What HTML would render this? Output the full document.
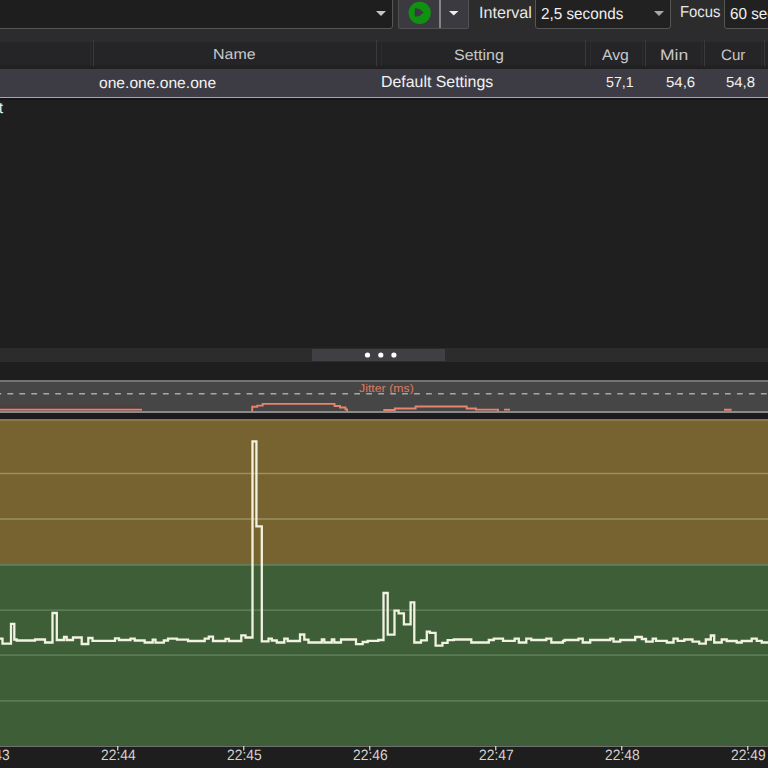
<!DOCTYPE html>
<html><head><meta charset="utf-8">
<style>
*{margin:0;padding:0;box-sizing:border-box}
html,body{width:768px;height:768px;overflow:hidden;background:#1f1f1f;font-family:"Liberation Sans",sans-serif}
.a{position:absolute}
.t{position:absolute;white-space:nowrap;line-height:1;transform-origin:0 0;text-rendering:geometricPrecision}
</style></head><body>
<div class="a" style="left:0;top:0;width:768px;height:30px;background:#2c2c2c"></div>
<div class="a" style="left:-4px;top:-4px;width:397px;height:33px;background:#1e1e1e;border:1.5px solid #565656;border-radius:3px"></div>
<div class="a" style="left:397.5px;top:-4px;width:71px;height:33px;background:#3b3a40;border:1.5px solid #505050;border-radius:2px"></div>
<div class="a" style="left:439px;top:0;width:1.5px;height:28px;background:#858585"></div>
<div class="a" style="left:535px;top:-4px;width:136px;height:33px;background:#212121;border:1.5px solid #565656;border-radius:3px"></div>
<div class="a" style="left:723.5px;top:-4px;width:60px;height:33px;background:#212121;border:1.5px solid #565656;border-radius:3px"></div>
<svg class="a" style="left:0;top:0" width="768" height="30">
<path d="M376,11 L386,11 L381,16 Z" fill="#c4c4c4"/>
<path d="M449,11 L458.5,11 L453.75,15.5 Z" fill="#eee"/>
<path d="M654,11 L664,11 L659,16 Z" fill="#a8a8a8"/>
<circle cx="419.7" cy="12.8" r="11.1" fill="#0f920f"/>
<path d="M415.3,8.9 L419.3,9.7 L422.8,12.5 L419.3,15.3 L415.3,16.1 Z" fill="#3b3a40" stroke="#3b3a40" stroke-width="1.2" stroke-linejoin="round"/>
</svg>
<div class="t" style="left:479.25px;top:4.60px;font-size:16.26px;color:#e8e8e8;transform:scaleX(0.9925)">Interval</div>
<div class="t" style="left:541.14px;top:6.87px;font-size:15.83px;color:#f0f0f0;transform:scaleX(0.9638)">2,5 seconds</div>
<div class="t" style="left:680.41px;top:4.87px;font-size:15.83px;color:#e8e8e8;transform:scaleX(0.9393)">Focus</div>
<div class="t" style="left:729.95px;top:7.17px;font-size:15.83px;color:#f0f0f0;transform:scaleX(0.9638)">60 seconds</div>
<div class="a" style="left:0;top:30px;width:768px;height:12px;background:#2c2c2e"></div>
<div class="a" style="left:0;top:42px;width:768px;height:23px;background:#252527"></div>
<div class="a" style="left:0;top:65px;width:768px;height:3px;background:#212124"></div>
<div class="a" style="left:90px;top:40px;width:1px;height:26px;background:#2c2c2f"></div><div class="a" style="left:93px;top:40px;width:1.3px;height:26px;background:#3a3a3d"></div>
<div class="a" style="left:381px;top:40px;width:1px;height:26px;background:#2c2c2f"></div><div class="a" style="left:376px;top:40px;width:1.3px;height:26px;background:#3a3a3d"></div>
<div class="a" style="left:590px;top:40px;width:1px;height:26px;background:#2c2c2f"></div><div class="a" style="left:584.5px;top:40px;width:1.3px;height:26px;background:#3a3a3d"></div>
<div class="a" style="left:642px;top:40px;width:1px;height:26px;background:#2c2c2f"></div><div class="a" style="left:645px;top:40px;width:1.3px;height:26px;background:#3a3a3d"></div>
<div class="a" style="left:701px;top:40px;width:1px;height:26px;background:#2c2c2f"></div><div class="a" style="left:704px;top:40px;width:1.3px;height:26px;background:#3a3a3d"></div>
<div class="a" style="left:761px;top:40px;width:1px;height:26px;background:#2c2c2f"></div><div class="a" style="left:764px;top:40px;width:1.3px;height:26px;background:#3a3a3d"></div>
<div class="t" style="left:212.62px;top:48.07px;font-size:14.53px;color:#c8c8c8;transform:scaleX(1.0999)">Name</div>
<div class="t" style="left:453.60px;top:48.08px;font-size:15.11px;color:#c8c8c8;transform:scaleX(1.0613)">Setting</div>
<div class="t" style="left:602.20px;top:47.68px;font-size:15.11px;color:#c8c8c8;transform:scaleX(1.0413)">Avg</div>
<div class="t" style="left:659.50px;top:47.68px;font-size:15.11px;color:#c8c8c8;transform:scaleX(1.1617)">Min</div>
<div class="t" style="left:721.04px;top:47.68px;font-size:15.11px;color:#c8c8c8;transform:scaleX(1.0015)">Cur</div>
<div class="a" style="left:0;top:68.5px;width:768px;height:28px;background:#3d3c44"></div>
<div class="a" style="left:0;top:96.5px;width:768px;height:1.8px;background:#a8a8a8"></div>
<div class="a" style="left:0;top:98.3px;width:768px;height:2px;background:#161616"></div>
<div class="t" style="left:99.08px;top:76.18px;font-size:15.23px;color:#f2f2f2;transform:scaleX(1.0256)">one.one.one.one</div>
<div class="t" style="left:380.73px;top:75.14px;font-size:15.97px;color:#f2f2f2;transform:scaleX(0.9951)">Default Settings</div>
<div class="t" style="left:606.33px;top:76.07px;font-size:14.53px;color:#f2f2f2;transform:scaleX(0.9804)">57,1</div>
<div class="t" style="left:665.60px;top:76.07px;font-size:14.53px;color:#f2f2f2;transform:scaleX(1.0322)">54,6</div>
<div class="t" style="left:725.90px;top:76.07px;font-size:14.53px;color:#f2f2f2;transform:scaleX(1.0285)">54,8</div>
<div class="t" style="left:-1.20px;top:101.15px;font-size:15.50px;color:#f2f2f2;transform:scaleX(1.0000)">t</div>
<div class="a" style="left:0;top:348px;width:768px;height:13.5px;background:#2c2c2d"></div>
<div class="a" style="left:312px;top:348.5px;width:133px;height:12.5px;background:#3f3f44"></div>
<svg class="a" style="left:0;top:340px" width="768" height="30">
<circle cx="367.5" cy="15" r="2.6" fill="#fff"/><circle cx="380.8" cy="15" r="2.6" fill="#fff"/><circle cx="393.9" cy="15" r="2.6" fill="#fff"/>
</svg>
<div class="a" style="left:0;top:361.5px;width:768px;height:18px;background:#1e1e1e"></div>
<div class="a" style="left:0;top:379.5px;width:768px;height:33.5px;background:#464646;border-top:2px solid #747474;border-bottom:2px solid #8a8a8a"></div>
<svg class="a" style="left:0;top:376px" width="768" height="44">
<defs><linearGradient id="jg" x1="0" y1="0" x2="0" y2="1"><stop offset="0" stop-color="#464646" stop-opacity="0"/><stop offset="1" stop-color="#5a3038" stop-opacity="0.6"/></linearGradient></defs>
<rect x="0" y="25" width="142" height="8" fill="url(#jg)"/>
<line x1="-4.56" y1="17.8" x2="770" y2="17.8" stroke="#a8a8a8" stroke-width="1.4" stroke-dasharray="5.8 6.16"/>
<path d="M0,33.6 H142 M252.2,35.5 V30.7 H257.2 V29.6 H262.7 V27.9 H334.5 V30 H340 V31.5 H345.5 V33.4 H347 V35.5 M383.3,34 H394.8 V32.5 H415.6 V30.5 H466.7 V32.5 H476 V33.6 H498 V35.5 M504,33.6 H510 M724,33.8 H731.6" fill="none" stroke="#e8846c" stroke-width="1.9"/>
</svg>
<div class="t" style="left:358.65px;top:383.90px;font-size:11.22px;color:#de7a62;transform:scaleX(1.0995)">Jitter (ms)</div>
<div class="a" style="left:0;top:413px;width:768px;height:6px;background:#1c1c20"></div>
<div class="a" style="left:0;top:419px;width:768px;height:146px;background:#76632f"></div>
<div class="a" style="left:0;top:419px;width:768px;height:1.5px;background:#8a7a48"></div>
<div class="a" style="left:0;top:565px;width:768px;height:181px;background:#3e5e38"></div>
<svg class="a" style="left:0;top:0" width="768" height="768">
<g stroke="#9a9062" stroke-width="1.3"><line x1="0" y1="473.5" x2="768" y2="473.5"/><line x1="0" y1="519" x2="768" y2="519"/></g>
<g stroke="#667e5c" stroke-width="1.8"><line x1="0" y1="564.8" x2="768" y2="564.8"/></g><g stroke="#66865e" stroke-width="1.3"><line x1="0" y1="610.2" x2="768" y2="610.2"/><line x1="0" y1="655.2" x2="768" y2="655.2"/><line x1="0" y1="700.9" x2="768" y2="700.9"/></g>
<path d="M0,638.7 H2.5 V643.7 H11.0 V623.8 H14.3 V639.5 H16.7 V640.5 H35.0 V639.5 H45.0 V642.5 H52.5 V613.0 H56.8 V640.0 H64.0 V637.0 H66.7 V640.0 H73.0 V637.5 H81.7 V644.0 H88.3 V638.0 H92.5 V640.8 H115.0 V638.3 H119.0 V640.0 H130.5 V638.7 H134.7 V640.5 H144.7 V642.5 H152.7 V639.7 H155.5 V642.7 H163.8 V640.5 H168.0 V638.7 H177.0 V639.7 H188.0 V641.0 H204.7 V638.7 H208.8 V636.7 H213.0 V641.0 H225.5 V638.8 H228.8 V641.0 H241.3 V635.3 H245.5 V637.5 H252.5 V441.4 H256.4 V526.4 H261.8 V641.3 H268.5 V638.7 H271.8 V640.5 H276.8 V642.5 H284.3 V638.7 H287.7 V641.0 H300.0 V634.5 H304.3 V639.7 H308.5 V642.5 H321.8 V639.5 H324.3 V642.5 H331.8 V639.5 H334.3 V642.5 H341.0 V639.5 H356.0 V644.2 H362.7 V642.0 H367.7 V640.8 H378.3 V640.0 H383.5 V593.0 H387.7 V634.7 H394.5 V610.7 H398.6 V613.3 H403.9 V624.3 H410.6 V602.4 H414.3 V642.5 H421.0 V640.4 H426.8 V631.6 H429.9 V632.9 H435.6 V645.6 H442.4 V642.8 H447.6 V640.2 H453.8 V639.5 H471.3 V642.5 H488.8 V640.0 H493.8 V638.7 H503.0 V640.8 H514.7 V638.7 H518.8 V642.5 H526.3 V638.7 H531.3 V640.0 H546.3 V638.7 H551.3 V642.5 H563.0 V640.8 H564.7 V640.0 H578.5 V638.7 H582.7 V642.5 H590.2 V640.0 H610.2 V638.7 H613.5 V641.7 H620.2 V640.0 H635.2 V637.0 H641.8 V639.0 H646.0 V641.7 H652.7 V638.7 H656.0 V640.8 H666.8 V642.5 H673.5 V638.7 H677.7 V640.8 H684.3 V639.5 H692.5 V641.7 H699.2 V643.7 H705.8 V639.5 H710.8 V635.5 H714.2 V642.5 H721.7 V639.5 H726.7 V641.0 H736.7 V642.5 H741.7 V641.0 H751.7 V638.7 H756.7 V640.8 H761.7 V642.5 H769.0 V642.5 H770" fill="none" stroke="#f2f2e0" stroke-width="2.3"/>
</svg>
<div class="a" style="left:0;top:745.5px;width:768px;height:23px;background:#1e1e1e;border-top:1.5px solid #707070"></div>
<div class="t" style="left:-25.49px;top:749.21px;font-size:14.96px;color:#d4d4d4;transform:scaleX(0.9261)">22:43</div>
<div class="t" style="left:100.51px;top:749.21px;font-size:14.96px;color:#d4d4d4;transform:scaleX(0.9261)">22:44</div>
<div class="t" style="left:226.51px;top:749.21px;font-size:14.96px;color:#d4d4d4;transform:scaleX(0.9261)">22:45</div>
<div class="t" style="left:352.51px;top:749.21px;font-size:14.96px;color:#d4d4d4;transform:scaleX(0.9261)">22:46</div>
<div class="t" style="left:478.51px;top:749.21px;font-size:14.96px;color:#d4d4d4;transform:scaleX(0.9261)">22:47</div>
<div class="t" style="left:604.51px;top:749.21px;font-size:14.96px;color:#d4d4d4;transform:scaleX(0.9261)">22:48</div>
<div class="t" style="left:730.51px;top:749.21px;font-size:14.96px;color:#d4d4d4;transform:scaleX(0.9261)">22:49</div>
<svg class="a" style="left:0;top:745" width="768" height="10"><g stroke="#e0e0e0" stroke-width="1.2"><line x1="-8.25" y1="1" x2="-8.25" y2="5.5"/><line x1="117.75" y1="1" x2="117.75" y2="5.5"/><line x1="243.75" y1="1" x2="243.75" y2="5.5"/><line x1="369.75" y1="1" x2="369.75" y2="5.5"/><line x1="495.75" y1="1" x2="495.75" y2="5.5"/><line x1="621.75" y1="1" x2="621.75" y2="5.5"/><line x1="747.75" y1="1" x2="747.75" y2="5.5"/></g></svg>
</body></html>
